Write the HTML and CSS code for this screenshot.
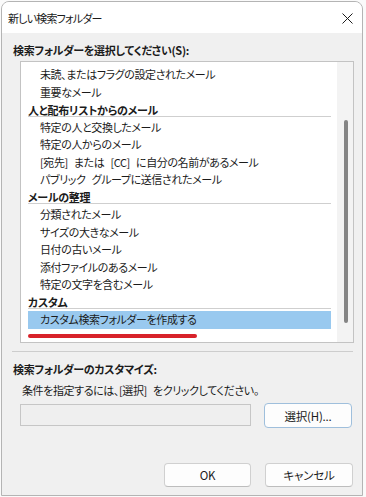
FILE: index.html
```html
<!DOCTYPE html>
<html lang="ja">
<head>
    <meta charset="UTF-8">
    <meta name="viewport" content="width=device-width, initial-scale=1.0">
    <title>新しい検索フォルダー</title>
    <link rel="stylesheet" href="styles.css">
</head>
<body>
    <div class="window">
        <div class="titlebar">
            <span class="title">新しい検索フォルダー</span>
            <svg class="close" width="11" height="11" viewBox="0 0 11 11">
                <path d="M0.5 0.5 L10.5 10.5 M10.5 0.5 L0.5 10.5" stroke="#1c1c1c" stroke-width="1" fill="none"/>
            </svg>
        </div>

        <div class="content">
            <div class="label">検索フォルダーを選択してください(S):</div>

            <div class="listbox">
                <div class="list">
                    <div class="item">未読、またはフラグの設定されたメール</div>
                    <div class="item">重要なメール</div>
                    <div class="group">人と配布リストからのメール</div>
                    <div class="item">特定の人と交換したメール</div>
                    <div class="item">特定の人からのメール</div>
                    <div class="item">[宛先] または [CC] に自分の名前があるメール</div>
                    <div class="item">パブリック グループに送信されたメール</div>
                    <div class="group">メールの整理</div>
                    <div class="item">分類されたメール</div>
                    <div class="item">サイズの大きなメール</div>
                    <div class="item">日付の古いメール</div>
                    <div class="item">添付ファイルのあるメール</div>
                    <div class="item">特定の文字を含むメール</div>
                    <div class="group">カスタム</div>
                    <div class="item selected">カスタム検索フォルダーを作成する</div>
                    <div class="mark"></div>
                </div>
                <div class="scrollbar"><div class="thumb"></div></div>
            </div>

            <div class="separator"></div>

            <div class="label label-second">検索フォルダーのカスタマイズ:</div>
            <div class="hint">条件を指定するには、[選択] をクリックしてください。</div>

            <div class="criteria-row">
                <div class="criteria"></div>
                <button type="button" class="btn btn-default">選択(H)...</button>
            </div>

            <div class="footer">
                <button type="button" class="btn">OK</button>
                <button type="button" class="btn">キャンセル</button>
            </div>
        </div>
    </div>
</body>
</html>
```

FILE: styles.css
```css
html, body {
    margin: 0;
    padding: 0;
    background-color: #fafafa;
}
body {
    font-family: "Noto Sans CJK JP", "Noto Sans", sans-serif;
    font-size: 11px;
    letter-spacing: -0.4px;
    word-spacing: 4px;
    font-feature-settings: "palt";
    color: #1b1b1b;
}
.window {
    box-sizing: border-box;
    width: 362px;
    height: 495px;
    margin: 1px 0 0 1px;
    border: 1px solid #b4b4b4;
    border-radius: 8px 8px 0 0;
    background-color: #f0f0f0;
    overflow: hidden;
}
.titlebar {
    height: 31px;
    background-color: #ffffff;
    display: flex;
    align-items: center;
    justify-content: space-between;
    padding: 0 9px 0 6px;
}
.title {
    font-size: 11px;
    letter-spacing: -0.8px;
    line-height: 16px;
    margin-top: 1px;
}
.close {
    display: block;
    margin-top: 1px;
}
.content {
    padding: 0 9px 0 11px;
}
.label {
    margin-top: 9px;
    line-height: 16px;
    font-weight: bold;
    letter-spacing: -0.3px;
}
.listbox {
    box-sizing: border-box;
    width: 334px;
    height: 282px;
    margin: 3px 0 0 7px;
    border: 1px solid #c3c3c3;
    background-color: #ffffff;
    display: flex;
}
.list {
    flex: 1;
    padding: 4px 6px 0 7px;
}
.item {
    height: 17.5px;
    line-height: 17.5px;
    padding-left: 12px;
    white-space: nowrap;
}
.group {
    padding-top: 2.5px;
    line-height: 12px;
    font-weight: bold;
    letter-spacing: -0.3px;
    border-bottom: 1px solid #cfcfcf;
    margin-bottom: 2px;
}
.selected {
    background-color: #99c9ef;
}
.mark {
    width: 169px;
    height: 4px;
    margin-top: 5px;
    border-radius: 2px;
    background-color: #d8222a;
}
.scrollbar {
    width: 16px;
    background-color: #f3f3f3;
    padding-top: 58px;
    box-sizing: border-box;
    display: flex;
    justify-content: center;
}
.thumb {
    width: 4px;
    height: 203px;
    margin-left: 1px;
    border-radius: 2px;
    background-color: #858585;
}
.separator {
    height: 1px;
    margin: 8px 0 0 -1px;
    background-color: #cdcdcd;
}
.hint {
    margin-top: 5px;
    padding-left: 9px;
    line-height: 16px;
}
.criteria-row {
    display: flex;
    align-items: flex-start;
    gap: 13px;
    margin-top: 5px;
    padding-left: 7px;
}
.criteria {
    box-sizing: border-box;
    width: 231px;
    height: 22px;
    margin-top: 1px;
    border: 1px solid #c6c6c6;
    background-color: #efefef;
}
.btn {
    box-sizing: border-box;
    width: 88px;
    height: 25px;
    padding: 0;
    font-family: inherit;
    font-size: 11.5px;
    letter-spacing: -0.2px;
    font-feature-settings: "palt";
    color: #1b1b1b;
    background-color: #fdfdfd;
    border: 1px solid #d0d0d0;
    border-bottom-color: #bdbdbd;
    border-radius: 4px;
}
.btn-default {
    border-color: #9fbfdc;
}
.footer {
    display: flex;
    justify-content: flex-end;
    gap: 14px;
    margin-top: 35px;
}
.footer .btn {
    height: 24px;
}
.footer .btn:first-child {
    width: 87px;
}
```
